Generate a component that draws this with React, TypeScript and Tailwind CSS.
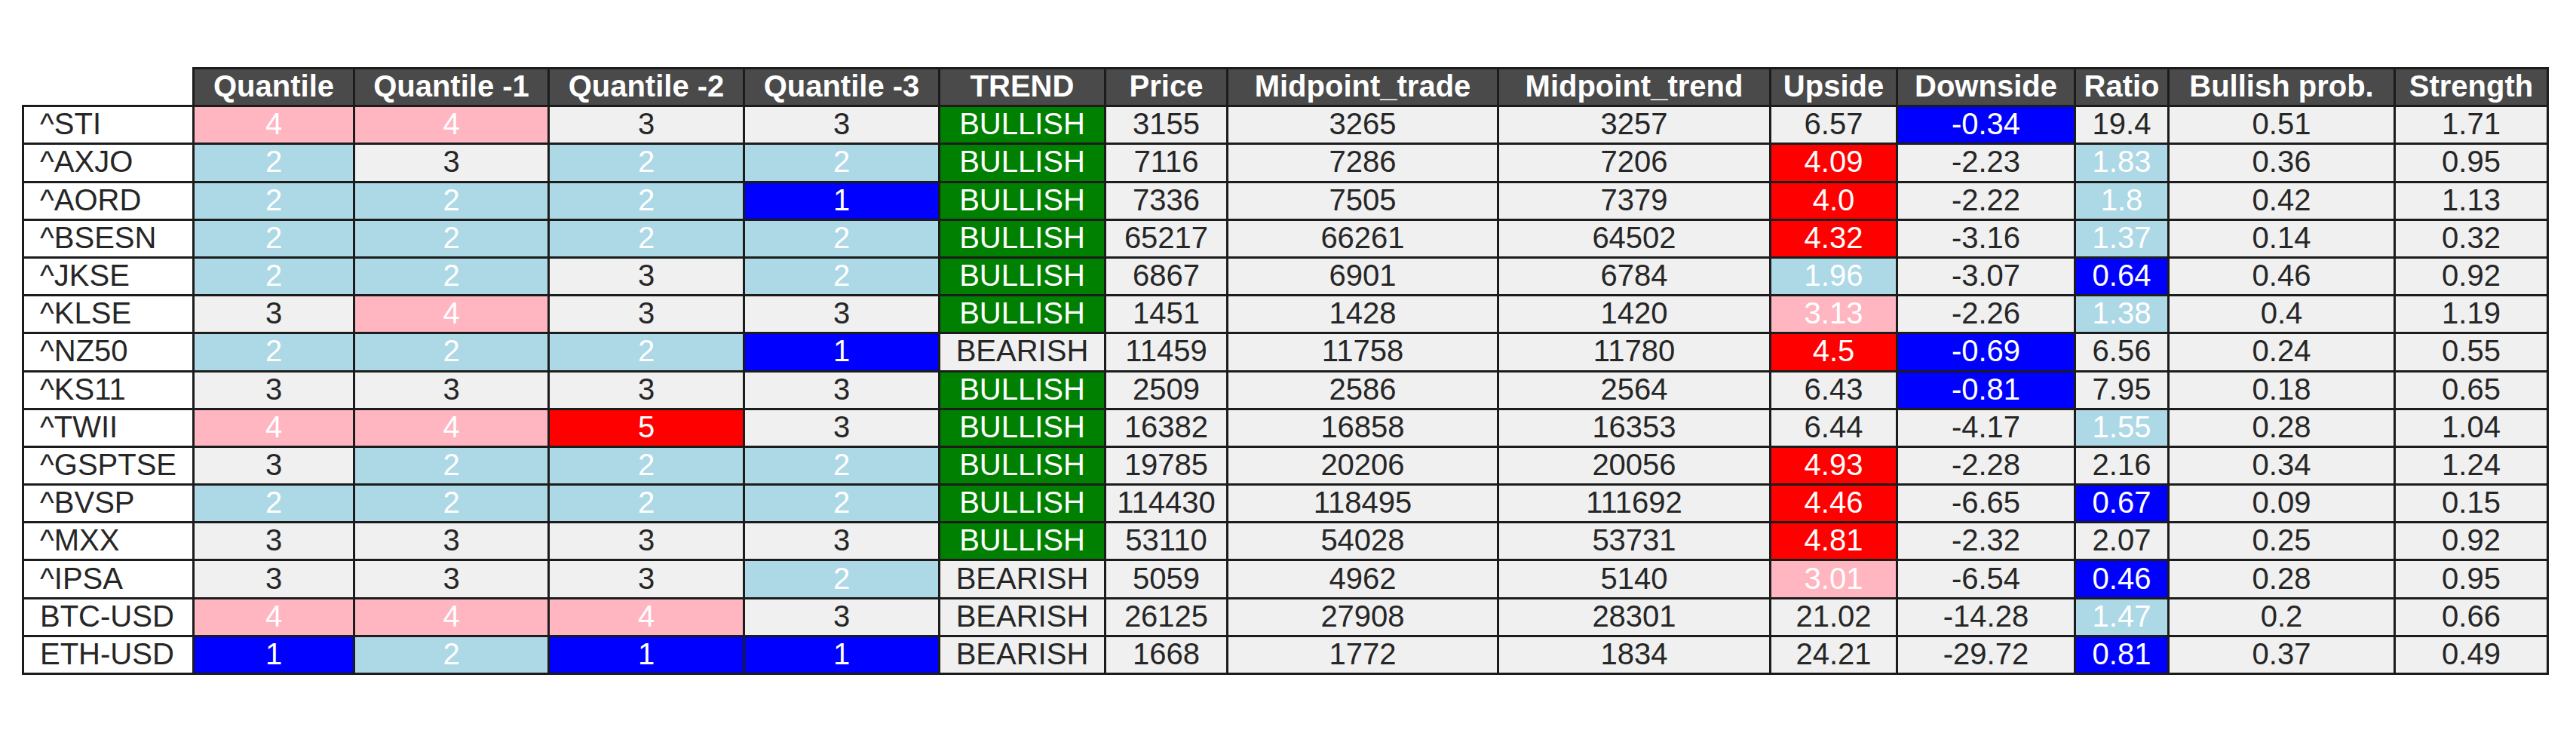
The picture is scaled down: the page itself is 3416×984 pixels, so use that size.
import React from "react";

type Cell = string;

const headers = [
  "Quantile",
  "Quantile -1",
  "Quantile -2",
  "Quantile -3",
  "TREND",
  "Price",
  "Midpoint_trade",
  "Midpoint_trend",
  "Upside",
  "Downside",
  "Ratio",
  "Bullish prob.",
  "Strength",
];

const widths = [
  "w-[226px]",
  "w-[213px]",
  "w-[258px]",
  "w-[259px]",
  "w-[259px]",
  "w-[220px]",
  "w-[162px]",
  "w-[359px]",
  "w-[361px]",
  "w-[168px]",
  "w-[236px]",
  "w-[124px]",
  "w-[300px]",
  "w-[203px]",
];

// value|colour code: p pink, l light blue, b blue, r red, g green
const rows: { name: string; cells: Cell[] }[] = [
  { name: "^STI", cells: ["4|p", "4|p", "3", "3", "BULLISH|g", "3155", "3265", "3257", "6.57", "-0.34|b", "19.4", "0.51", "1.71"] },
  { name: "^AXJO", cells: ["2|l", "3", "2|l", "2|l", "BULLISH|g", "7116", "7286", "7206", "4.09|r", "-2.23", "1.83|l", "0.36", "0.95"] },
  { name: "^AORD", cells: ["2|l", "2|l", "2|l", "1|b", "BULLISH|g", "7336", "7505", "7379", "4.0|r", "-2.22", "1.8|l", "0.42", "1.13"] },
  { name: "^BSESN", cells: ["2|l", "2|l", "2|l", "2|l", "BULLISH|g", "65217", "66261", "64502", "4.32|r", "-3.16", "1.37|l", "0.14", "0.32"] },
  { name: "^JKSE", cells: ["2|l", "2|l", "3", "2|l", "BULLISH|g", "6867", "6901", "6784", "1.96|l", "-3.07", "0.64|b", "0.46", "0.92"] },
  { name: "^KLSE", cells: ["3", "4|p", "3", "3", "BULLISH|g", "1451", "1428", "1420", "3.13|p", "-2.26", "1.38|l", "0.4", "1.19"] },
  { name: "^NZ50", cells: ["2|l", "2|l", "2|l", "1|b", "BEARISH", "11459", "11758", "11780", "4.5|r", "-0.69|b", "6.56", "0.24", "0.55"] },
  { name: "^KS11", cells: ["3", "3", "3", "3", "BULLISH|g", "2509", "2586", "2564", "6.43", "-0.81|b", "7.95", "0.18", "0.65"] },
  { name: "^TWII", cells: ["4|p", "4|p", "5|r", "3", "BULLISH|g", "16382", "16858", "16353", "6.44", "-4.17", "1.55|l", "0.28", "1.04"] },
  { name: "^GSPTSE", cells: ["3", "2|l", "2|l", "2|l", "BULLISH|g", "19785", "20206", "20056", "4.93|r", "-2.28", "2.16", "0.34", "1.24"] },
  { name: "^BVSP", cells: ["2|l", "2|l", "2|l", "2|l", "BULLISH|g", "114430", "118495", "111692", "4.46|r", "-6.65", "0.67|b", "0.09", "0.15"] },
  { name: "^MXX", cells: ["3", "3", "3", "3", "BULLISH|g", "53110", "54028", "53731", "4.81|r", "-2.32", "2.07", "0.25", "0.92"] },
  { name: "^IPSA", cells: ["3", "3", "3", "2|l", "BEARISH", "5059", "4962", "5140", "3.01|p", "-6.54", "0.46|b", "0.28", "0.95"] },
  { name: "BTC-USD", cells: ["4|p", "4|p", "4|p", "3", "BEARISH", "26125", "27908", "28301", "21.02", "-14.28", "1.47|l", "0.2", "0.66"] },
  { name: "ETH-USD", cells: ["1|b", "2|l", "1|b", "1|b", "BEARISH", "1668", "1772", "1834", "24.21", "-29.72", "0.81|b", "0.37", "0.49"] },
];

const tones: Record<string, string> = {
  p: "bg-[#ffb6c1] text-white",
  l: "bg-[#add8e6] text-white",
  b: "bg-[#0000ff] text-white",
  r: "bg-[#ff0000] text-white",
  g: "bg-[#008000] text-white",
  "": "bg-[#f0f0f0] text-[#262626]",
};

export default function App() {
  return (
    <div className="w-[3416px] h-[984px] bg-white font-['Liberation_Sans',Arial,sans-serif]">
      <div className="pt-[89px] pl-[29px]">
        <table className="table-fixed border-collapse text-[40px] leading-none">
          <colgroup>
            {widths.map((w, i) => (
              <col key={i} className={w} />
            ))}
          </colgroup>
          <thead>
            <tr className="h-[50.2px]">
              <th className="border-0 bg-white p-0" />
              {headers.map((h) => (
                <th
                  key={h}
                  className="border-[3px] border-[#1c1c1c] bg-[#4a4a4a] p-0 pb-[4px] text-center font-bold text-white whitespace-nowrap"
                >
                  {h}
                </th>
              ))}
            </tr>
          </thead>
          <tbody>
            {rows.map((row) => (
              <tr key={row.name} className="h-[50.2px]">
                <td className="border-[3px] border-[#1c1c1c] bg-white p-0 pl-[21px] pb-[3px] text-left text-[#262626] whitespace-nowrap">
                  {row.name}
                </td>
                {row.cells.map((c, i) => {
                  const [text, tone = ""] = c.split("|");
                  return (
                    <td
                      key={i}
                      className={`border-[3px] border-[#1c1c1c] p-0 pb-[3px] text-center whitespace-nowrap ${tones[tone]}`}
                    >
                      {text}
                    </td>
                  );
                })}
              </tr>
            ))}
          </tbody>
        </table>
      </div>
    </div>
  );
}
